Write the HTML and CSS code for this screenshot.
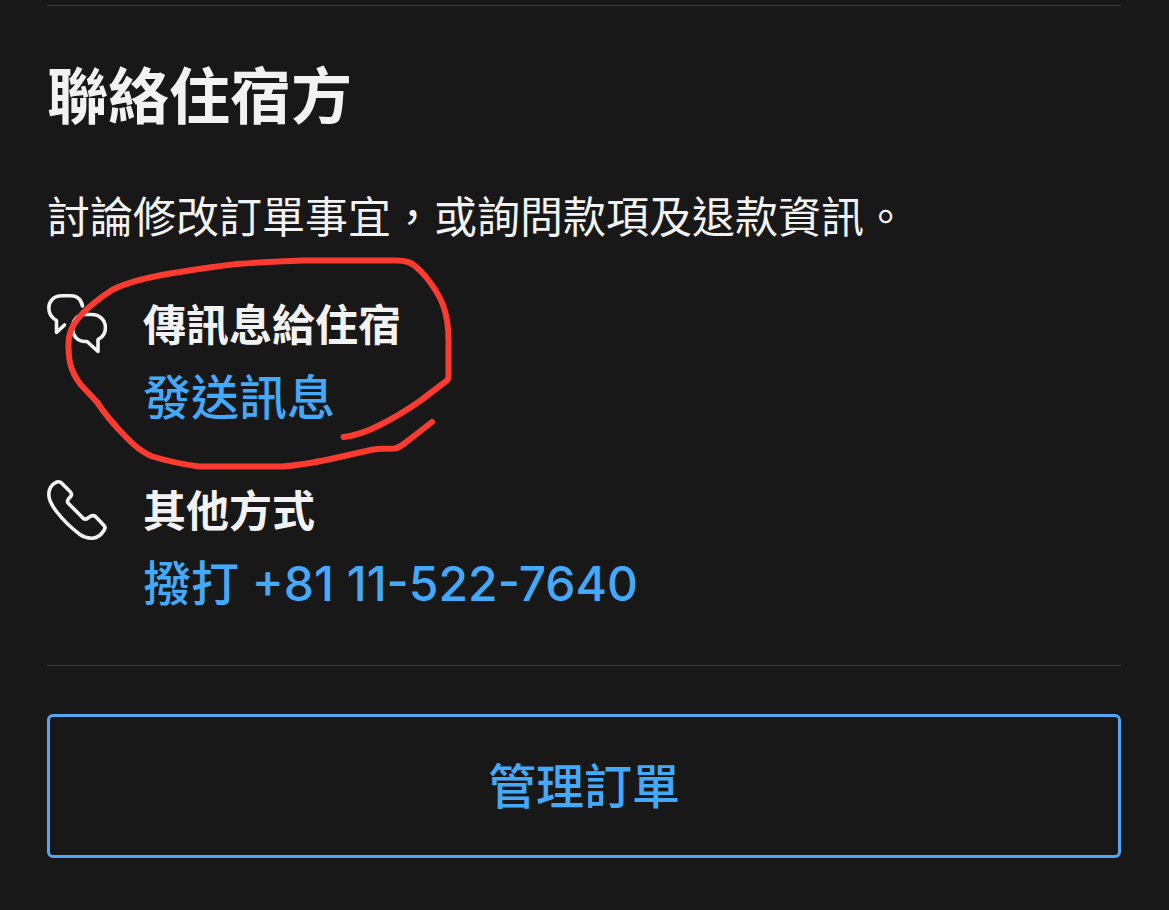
FILE: index.html
```html
<!DOCTYPE html>
<html lang="zh-Hant">
<head>
<meta charset="utf-8">
<meta name="viewport" content="width=device-width, initial-scale=1">
<title>聯絡住宿方</title>
<link rel="stylesheet" href="styles.css">
</head>
<body>
<main class="page">
  <section class="contact">
    <h1 class="contact-title">聯絡住宿方</h1>
    <p class="contact-intro">討論修改訂單事宜，或詢問款項及退款資訊。</p>
    <ul class="methods">
      <li class="method">
        <svg class="method-icon" viewBox="0 0 60 60" aria-hidden="true">
          <path d="M35.500 12C34 5 29.500 1.800 24 1.800H15C6.500 1.800 1.800 7.500 1.800 14C1.800 19.500 4 23.500 9.500 26.500V38.500L17.500 31"/>
          <path d="M37.500 20.500H44.500C53 20.500 58.500 26.500 58.500 33.500C58.500 39 56 43 51 45.500V57.500L40 47.500H38C30.500 47.500 25.500 41.500 25.500 34.500C25.500 26.500 30.500 20.500 37.500 20.500Z"/>
        </svg>
        <div class="method-text">
          <h2 class="method-title">傳訊息給住宿</h2>
          <a class="method-link" href="#message">發送訊息</a>
        </div>
      </li>
      <li class="method">
        <svg class="method-icon" viewBox="0 0 60 60" aria-hidden="true">
          <path d="M14.500 3L23 11.500Q25.500 14 24 16L21.500 19Q19.500 21.500 21.500 23.500L36.500 38.500Q38.500 40 41 38L44 36Q46.500 35 48.500 36.500L57 45.500Q58.800 47.500 57.500 49.500C54 55.500 49.500 58.500 44.500 58.200C40 58 36.500 57 33 54.500C25 48.500 16 40 9.500 31.500C4.500 25 1.800 19.500 1.800 14.500C1.800 9 4.500 4.500 9 2.300Q12 1 14.500 3Z"/>
        </svg>
        <div class="method-text">
          <h2 class="method-title">其他方式</h2>
          <a class="method-link" href="tel:+81115227640">撥打 +81 11-522-7640</a>
        </div>
      </li>
    </ul>
  </section>
  <button class="manage" type="button">管理訂單</button>
</main>
<svg class="markup" viewBox="0 0 400 220" aria-hidden="true">
  <path transform="translate(-60 -254)" d="M343.500 437Q360 435 378 426Q400 415 420 401L445 382Q448.500 380 448.500 376V340Q448.500 320 443 305Q438 292 426 277Q415 264 408 262Q403 260.500 396 260.500H303Q270 261.500 237 264Q210 267 180 272Q133 279 112 290Q95 301 83 313Q71 325 69 337Q67.500 350 70 363Q73 375 81 385L97 402Q108 419 126 437Q138 450 151 456Q173 463 199 466.500H282Q300 465.500 333 458.500L373 449.500Q382 448.500 395 448.500Q399 447.500 403 444.500Q418 433 432 422"/>
</svg>
</body>
</html>
```

FILE: styles.css
```css
* {
  box-sizing: border-box;
}

body {
  position: relative;
  margin: 0;
  background: #181818;
  color: #f2f2f2;
  font-family: Inter, "Noto Sans CJK TC", sans-serif;
}

.page {
  padding: 5px 48px 51px 47px;
}

.contact {
  padding: 55px 0 39px;
  border-top: 1px solid #3c3c3c;
  border-bottom: 1px solid #3c3c3c;
}

.contact-title {
  margin: 0;
  font-size: 61px;
  font-weight: 700;
  line-height: 72px;
}

.contact-intro {
  margin: 54px 0 47px;
  font-size: 43px;
  font-weight: 400;
  line-height: 60px;
}

.methods {
  display: grid;
  gap: 40px;
  margin: 0;
  padding: 0;
  list-style: none;
}

.method {
  display: flex;
  align-items: flex-start;
  gap: 36px;
}

.method-icon {
  flex: none;
  width: 60px;
  height: 60px;
  fill: none;
  stroke: #f2f2f2;
  stroke-width: 3.6;
  stroke-linejoin: round;
  stroke-linecap: round;
}

.method-title {
  margin: 0;
  font-size: 43px;
  font-weight: 700;
  line-height: 62px;
}

.method-link {
  display: block;
  color: #45a9f9;
  font-size: 48px;
  font-weight: 500;
  line-height: 84px;
  text-decoration: none;
}

.manage {
  display: block;
  width: 100%;
  margin-top: 48px;
  padding: 34px 24px 32px;
  border: 3px solid #57a6f4;
  border-radius: 6px;
  background: transparent;
  color: #45a9f9;
  font: inherit;
  font-size: 48px;
  font-weight: 500;
  line-height: 72px;
}

.markup {
  position: absolute;
  top: 254px;
  left: 60px;
  width: 400px;
  height: 220px;
  fill: none;
  stroke: #fb3b30;
  stroke-width: 6;
  stroke-linecap: round;
  stroke-linejoin: round;
  pointer-events: none;
}
```
